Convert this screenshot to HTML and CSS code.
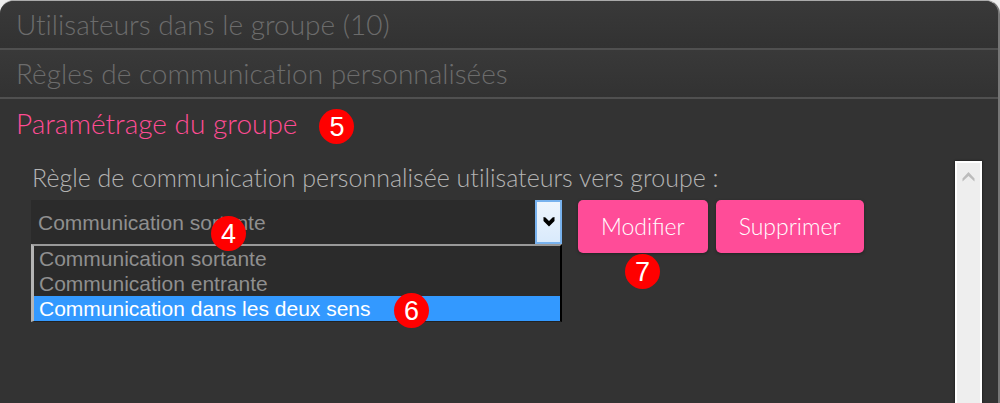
FILE: index.html
```html
<!DOCTYPE html>
<html lang="fr">
<head>
<meta charset="utf-8">
<title>Paramétrage du groupe</title>
<link rel="stylesheet" href="styles.css">
</head>
<body>
<main class="panel">
  <h2 class="section"><button class="section-toggle" type="button">Utilisateurs dans le groupe (10)</button></h2>
  <h2 class="section"><button class="section-toggle" type="button">Règles de communication personnalisées</button></h2>
  <h2 class="section section-open"><button class="section-toggle" type="button">Paramétrage du groupe</button><span class="badge badge-title">5</span></h2>
  <div class="content">
    <form class="settings">
      <label class="rule-label" for="rule">Règle de communication personnalisée utilisateurs vers groupe :</label>
      <div class="controls">
        <div class="combo">
          <div class="combo-field">
            <select class="combo-select" id="rule">
              <option>Communication sortante</option>
              <option>Communication entrante</option>
              <option>Communication dans les deux sens</option>
            </select>
            <span class="combo-arrow">
              <svg width="14" height="12" viewBox="0 0 14 12"><path d="M1.500 1 3.500 1.500 7 5l3.500-3.500 2-.5v4L7 10.500 1.500 5z" fill="#000"/></svg>
            </span>
          </div>
          <ul class="options" role="listbox" aria-label="Règle">
            <li class="option" role="option">Communication sortante</li>
            <li class="option" role="option">Communication entrante</li>
            <li class="option option-active" role="option" aria-selected="true">Communication dans les deux sens</li>
          </ul>
          <span class="badge badge-field">4</span>
          <span class="badge badge-option">6</span>
        </div>
        <div class="action">
          <button class="button" type="button">Modifier</button>
          <span class="badge badge-button">7</span>
        </div>
        <button class="button" type="button">Supprimer</button>
      </div>
    </form>
    <div class="scrollbar">
      <svg width="13" height="12" viewBox="0 0 13 12"><path d="M.5 7.500 6.500 1l6 6.500v3L6.500 5l-6 5.500z" fill="#bcbcbc"/></svg>
    </div>
  </div>
</main>
</body>
</html>
```
FILE: styles.css
```css
* {
  box-sizing: border-box;
}

body {
  margin: 0;
  background: #eee;
  font-family: Lato, sans-serif;
  font-weight: 300;
}

.panel {
  display: flex;
  flex-direction: column;
  min-height: 100vh;
  overflow: hidden;
  border-top: 1px solid #aaa;
  border-right: 2px solid #777;
  border-radius: 14px 14px 0 0;
  background: #333;
}

.section {
  display: flex;
  align-items: center;
  gap: 22px;
  margin: 0;
  padding: 0 16px;
  border-bottom: 2px solid #505050;
  background: linear-gradient(#393939, #323232);
  font-size: 28px;
  font-weight: 300;
  line-height: 47px;
}

.section-toggle {
  padding: 0;
  border: 0;
  background: none;
  color: #6c6c6c;
  font: inherit;
  font-variant-ligatures: none;
}

.section-open {
  padding-top: 1px;
  border: 0;
  background: none;
}

.section-open .section-toggle {
  color: #ff4c94;
}

.content {
  display: flex;
  flex: 1;
  justify-content: space-between;
  padding: 14px 16px 0 31px;
}

.rule-label {
  display: block;
  padding: 0 1px;
  color: #b4b4b4;
  font-size: 25px;
  font-variant-ligatures: none;
  line-height: 32px;
}

.controls {
  display: flex;
  align-items: flex-start;
  gap: 8px;
  margin-top: 7px;
}

.combo {
  position: relative;
  width: 531px;
  margin-right: 8px;
  font-family: "Liberation Sans", Arial, sans-serif;
  font-weight: 400;
}

.combo-field {
  display: grid;
  grid-template-columns: 1fr 27px;
  height: 44px;
}

.combo-select {
  grid-area: 1 / 1 / 2 / 3;
  appearance: none;
  padding: 0 7px;
  border: 0;
  border-radius: 0;
  background: #2b2b2b;
  color: #8f8f8f;
  font: inherit;
  font-size: 21px;
}

.combo-arrow {
  display: grid;
  grid-area: 1 / 2;
  place-items: center;
  border: 2px solid #78b2ee;
  background: linear-gradient(#eef5fd, #d9eafc);
  pointer-events: none;
}

.options {
  margin: 0;
  padding: 0;
  border: 2px solid #999;
  border-left: 3px solid #b4b4b4;
  border-right-color: #000;
  border-bottom: 1px solid #222;
  background: #2b2b2b;
  list-style: none;
}

.option {
  padding: 0 5px;
  color: #8f8f8f;
  font-size: 21px;
  line-height: 25px;
}

.option-active {
  background: #39f;
  color: #fff;
}

.action {
  position: relative;
}

.button {
  display: block;
  padding: 0 23px;
  border: 0;
  border-radius: 5px;
  background: #ff4c98;
  box-shadow: 0 1px 3px #222;
  color: #fff;
  font: inherit;
  font-size: 23px;
  line-height: 53px;
}

.badge {
  width: 35px;
  height: 35px;
  border-radius: 50%;
  background: #f00;
  color: #fff;
  font: 400 27px/36px "Liberation Sans", Arial, sans-serif;
  text-align: center;
}

.badge-title {
  margin-top: 6px;
}

.badge-field {
  position: absolute;
  top: 16px;
  left: 180px;
}

.badge-option {
  position: absolute;
  top: 93px;
  left: 363px;
}

.badge-button {
  position: absolute;
  top: 54px;
  left: 47px;
}

.scrollbar {
  display: flex;
  justify-content: center;
  width: 27px;
  padding-top: 8px;
  border: 2px solid #fff;
  border-bottom: 0;
  background: #eee;
  box-shadow: 0 0 2px #111;
}
```
